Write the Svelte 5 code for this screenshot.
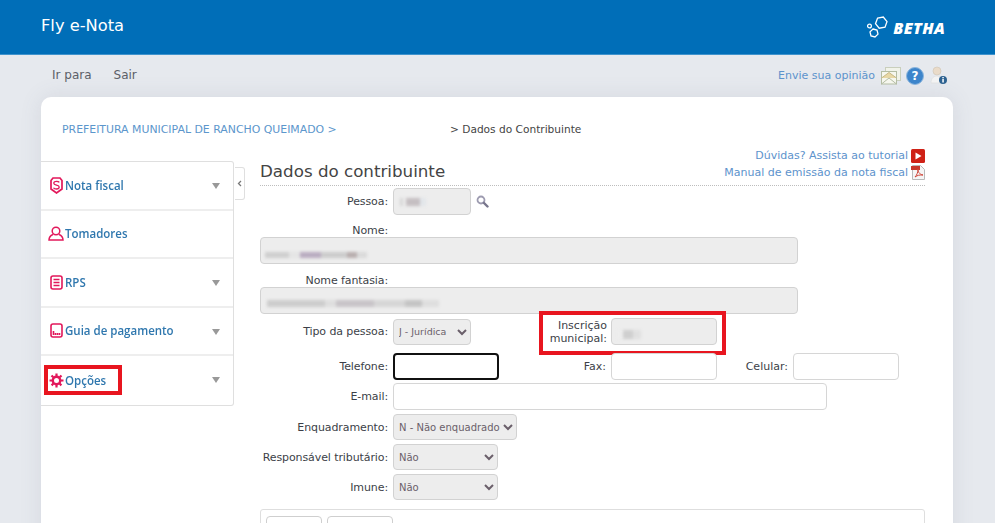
<script>
  const menu = [
    { label: 'Nota fiscal', icon: 'note', arrow: true },
    { label: 'Tomadores', icon: 'user', arrow: false },
    { label: 'RPS', icon: 'rps', arrow: true },
    { label: 'Guia de pagamento', icon: 'guide', arrow: true },
    { label: 'Opções', icon: 'gear', arrow: true, marked: true }
  ];
</script>

<div class="page">
  <header class="top">
    <span class="brand">Fly e-Nota</span>
    <span class="logo">
      <svg width="22" height="24" viewBox="0 0 22 24" fill="none" stroke="#fff" stroke-width="1.300" aria-hidden="true">
        <path d="M11.500 2.200l5.800-1.200 3.700 4.600-2 5.500-5.800 1.100-3.700-4.500z" />
        <circle cx="3.500" cy="10" r="1.900" />
        <path d="M7 13l4 1.100 1 4-3 2.900-4-1.100-1-4z" />
      </svg>
      <b>BETHA</b>
    </span>
  </header>

  <nav class="bar">
    <div class="bar-left"><span>Ir para</span><span>Sair</span></div>
    <div class="bar-right">
      <span class="opinion">Envie sua opinião</span>
      <svg width="20" height="18" viewBox="0 0 20 18" aria-hidden="true">
        <rect x="4.500" y="0.500" width="15" height="13" fill="#f1f3ea" stroke="#c9cfbc" />
        <rect x="0.500" y="4.500" width="15" height="12.500" fill="#f6f7ee" stroke="#b4bda4" />
        <path d="M0.500 11L8 5.500l7.500 5.500" fill="#e8d8a6" stroke="#c7b986" />
        <path d="M0.500 17L8 11l7.500 6" fill="none" stroke="#b4bda4" />
      </svg>
      <span class="help">?</span>
      <svg width="18" height="20" viewBox="0 0 18 20" aria-hidden="true">
        <circle cx="7" cy="5" r="4" fill="#eadbc9" stroke="#cfc4b6" stroke-width=".6" />
        <path d="M1 17c0-5 3-7 6-7s5 2 5 7z" fill="#f3f3f3" stroke="#dcdcdc" stroke-width=".6" />
        <circle cx="13" cy="14" r="4" fill="#2d6291" />
        <rect x="12.300" y="13" width="1.500" height="3.500" fill="#fff" />
        <rect x="12.300" y="11" width="1.500" height="1.300" fill="#fff" />
      </svg>
    </div>
  </nav>

  <main class="card">
    <div class="crumbs">
      <span class="crumb-link">PREFEITURA MUNICIPAL DE RANCHO QUEIMADO &gt;</span>
      <span class="crumb-here">&gt; Dados do Contribuinte</span>
    </div>

    <div class="columns">
      <aside class="side">
        <ul class="menu">
          {#each menu as item}
            <li class="item">
              <span class="ico">
                {#if item.icon === 'note'}
                  <svg width="13" height="17" viewBox="0 0 13 17" fill="none" stroke="#e2185b" stroke-width="1.700" aria-hidden="true">
                    <path d="M3 1h7l2 2.500V12l-5.500 4L1 12V3.500z" />
                    <path d="M9.300 5.300C8.800 4.500 7.700 4.300 6.500 4.300 5 4.300 3.800 5 3.800 6.300c0 2.500 5.400 1.300 5.400 3.800 0 1.200-1.200 1.900-2.700 1.900-1.300 0-2.500-.4-3-1.300" stroke-width="1.300" />
                  </svg>
                {:else if item.icon === 'user'}
                  <svg width="16" height="15" viewBox="0 0 16 15" fill="none" stroke="#e2185b" stroke-width="1.500" aria-hidden="true">
                    <circle cx="8" cy="5" r="3.800" />
                    <path d="M5 8.500C2.500 9.500 1 11 1 14h14c0-3-1.500-4.500-4-5.500" />
                  </svg>
                {:else if item.icon === 'rps'}
                  <svg width="13" height="15" viewBox="0 0 13 15" fill="none" stroke="#e2185b" stroke-width="1.600" aria-hidden="true">
                    <rect x="1" y="1" width="11" height="13" rx="2" />
                    <path d="M3.500 4.500h6M3.500 7.500h6M3.500 10.500h6" />
                  </svg>
                {:else if item.icon === 'guide'}
                  <svg width="13" height="15" viewBox="0 0 13 15" fill="none" stroke="#e2185b" stroke-width="1.600" aria-hidden="true">
                    <rect x="1" y="1" width="11" height="13" rx="2" />
                    <path d="M3.500 8v4M5.500 10v2M7.500 10v2M9.500 10v2" />
                  </svg>
                {:else}
                  <svg width="15" height="15" viewBox="0 0 15 15" aria-hidden="true">
                    <circle cx="7.500" cy="7.500" r="3.700" fill="none" stroke="#e2185b" stroke-width="2.400" />
                    <path d="M7.500 0.500v14M0.500 7.500h14M2.500 2.500l10 10M12.500 2.500l-10 10" stroke="#e2185b" stroke-width="2.200" stroke-dasharray="2.600 8.800" />
                  </svg>
                {/if}
              </span>
              <span class="item-label">{item.label}</span>
              {#if item.arrow}<span class="tri"></span>{/if}
              {#if item.marked}<span class="mark mark-options"></span>{/if}
            </li>
          {/each}
        </ul>
        <span class="toggle">
          <svg width="5" height="7" viewBox="0 0 5 7" fill="none" stroke="#777" stroke-width="1.300" aria-hidden="true"><path d="M4 1L1.500 3.500 4 6" /></svg>
        </span>
      </aside>

      <section class="content">
        <div class="title-row">
          <h1>Dados do contribuinte</h1>
          <div class="links">
            <div class="link-row">
              <span>Dúvidas? Assista ao tutorial</span>
              <svg width="14" height="14" viewBox="0 0 14 14" aria-hidden="true">
                <rect width="14" height="14" rx="1.500" fill="#cf2116" />
                <path d="M4.500 3.500v7L10.500 7z" fill="#fff" />
              </svg>
            </div>
            <div class="link-row">
              <span>Manual de emissão da nota fiscal</span>
              <svg width="14" height="15" viewBox="0 0 14 15" aria-hidden="true">
                <path d="M1.500 0.500h8l4 4v10h-12z" fill="#f5f5f5" stroke="#b9b9b9" />
                <rect x="0" y="1" width="9" height="4" fill="#c8372c" />
                <path d="M4 12c2-2 3-5 3-8 0 3 1 5 5 6-4 0-5 0-8 2z" fill="none" stroke="#d0463a" />
              </svg>
            </div>
          </div>
        </div>

        <form class="form">
          <div class="row row-pessoa">
            <label class="lab" for="f-pessoa">Pessoa:</label>
            <div class="field w78 off" id="f-pessoa"><i class="smear s-short"></i></div>
            <svg class="search" width="13" height="13" viewBox="0 0 13 13" fill="none" aria-hidden="true">
              <circle cx="5" cy="5" r="3.500" stroke="#9d9bb0" stroke-width="1.800" />
              <path d="M8 8l3.500 3.500" stroke="#77758c" stroke-width="2.400" stroke-linecap="round" />
            </svg>
          </div>

          <div class="stack stack-name">
            <div class="stack-label">Nome:</div>
            <div class="field wide off"><i class="smear s-name"></i></div>
          </div>
          <div class="stack stack-fantasy">
            <div class="stack-label">Nome fantasia:</div>
            <div class="field wide off"><i class="smear s-fantasy"></i></div>
          </div>

          <div class="row row-type">
            <label class="lab" for="f-tipo">Tipo da pessoa:</label>
            <select class="sel w78 narrow-text" id="f-tipo"><option>J - Jurídica</option></select>
            <div class="reg-wrap">
              <div class="reg-label">Inscrição municipal:</div>
              <div class="field w106 off"><i class="smear s-reg"></i></div>
              <span class="mark mark-reg"></span>
            </div>
          </div>

          <div class="row row-phone">
            <label class="lab" for="f-tel">Telefone:</label>
            <div class="field w106 focus" id="f-tel"></div>
            <span class="lab2 lab-fax">Fax:</span>
            <div class="field w106"></div>
            <span class="lab2 lab-cel">Celular:</span>
            <div class="field w106"></div>
          </div>

          <div class="row row-mail">
            <label class="lab" for="f-mail">E-mail:</label>
            <div class="field w434" id="f-mail"></div>
          </div>

          <div class="row row-enq">
            <label class="lab" for="f-enq">Enquadramento:</label>
            <select class="sel w124" id="f-enq"><option>N - Não enquadrado</option></select>
          </div>
          <div class="row row-sel">
            <label class="lab" for="f-resp">Responsável tributário:</label>
            <select class="sel w105" id="f-resp"><option>Não</option></select>
          </div>
          <div class="row row-sel">
            <label class="lab" for="f-imune">Imune:</label>
            <select class="sel w105" id="f-imune"><option>Não</option></select>
          </div>

          <div class="box">
            <span class="tab tab-a"></span>
            <span class="tab tab-b"></span>
          </div>
        </form>
      </section>
    </div>
  </main>
</div>

<style>
  :global(body) {
    margin: 0;
    background: #e6e9ee;
  }
  .page {
    width: 995px;
    height: 523px;
    overflow: hidden;
    font-family: "DejaVu Sans", Verdana, sans-serif;
    font-size: 11px;
    color: #3c3f48;
    background: #e6e9ee;
  }
  .top {
    height: 54px;
    background: #006eb8;
    border-bottom: 1px solid #3f93cd;
    display: flex;
    align-items: center;
    justify-content: space-between;
    padding: 0 50px 0 41px;
  }
  .brand {
    color: #fff;
    font-size: 16.300px;
    margin-top: -4px;
  }
  .logo {
    display: flex;
    align-items: center;
    gap: 5px;
    color: #fff;
    margin-top: 1px;
  }
  .logo b {
    font-family: "Open Sans", sans-serif;
    font-size: 16px;
    font-weight: 800;
    font-style: italic;
    letter-spacing: 0.300px;
  }
  .bar {
    height: 42px;
    display: flex;
    align-items: center;
    justify-content: space-between;
    padding: 0 47px 0 52px;
  }
  .bar-left {
    display: flex;
    gap: 22px;
    font-size: 12px;
    color: #5c6068;
    margin-top: -3px;
  }
  .bar-right {
    display: flex;
    align-items: center;
    gap: 5px;
    margin-top: -1px;
  }
  .opinion {
    color: #5d93cc;
    margin-right: 1px;
  }
  .help {
    width: 16px;
    height: 16px;
    margin-right: 1px;
    border-radius: 50%;
    background: #3d85cb;
    border: 1px solid #8cb6dd;
    color: #fff;
    font-size: 12px;
    font-weight: 700;
    display: flex;
    align-items: center;
    justify-content: center;
  }
  .card {
    margin: 0 42px 0 41px;
    height: 500px;
    background: #fff;
    border-radius: 10px 10px 0 0;
    box-shadow: 0 0 22px rgba(90, 100, 120, 0.12);
  }
  .crumbs {
    height: 64px;
    padding-left: 21px;
    display: flex;
    align-items: center;
    font-size: 10.600px;
    box-sizing: border-box;
  }
  .crumb-link {
    color: #5c96cc;
    width: 388px;
    font-size: 10.900px;
    white-space: nowrap;
  }
  .crumb-here {
    color: #444;
  }
  .columns {
    display: flex;
  }
  .side {
    width: 193px;
    flex: none;
    position: relative;
  }
  .menu {
    list-style: none;
    margin: 0;
    padding: 0;
    border: 1px solid #dfdfdf;
    border-left: 0;
    border-radius: 0 3px 3px 0;
  }
  .item {
    position: relative;
    height: 48.500px;
    display: flex;
    align-items: center;
    border-bottom: 2px solid #eeeeee;
    box-sizing: border-box;
    padding-left: 7px;
    font-family: "Open Sans", sans-serif;
    font-size: 12.500px;
    font-weight: 600;
    color: #2f77ae;
  }
  .item:last-child {
    border-bottom: 0;
  }
  .ico {
    width: 16px;
    margin-right: 1px;
    display: flex;
    justify-content: center;
    flex: none;
  }
  .item-label {
    transform: scaleX(0.92);
    transform-origin: left center;
    white-space: nowrap;
  }
  .tri {
    position: absolute;
    right: 13px;
    top: 21px;
    width: 0;
    height: 0;
    border-left: 4px solid transparent;
    border-right: 4px solid transparent;
    border-top: 6px solid #999;
  }
  .mark {
    position: absolute;
    border: 4px solid #e8151f;
    box-sizing: border-box;
    pointer-events: none;
  }
  .mark-options {
    left: 3px;
    top: 9px;
    width: 78px;
    height: 30px;
  }
  .toggle {
    position: absolute;
    left: 194px;
    top: 6px;
    width: 9px;
    height: 31px;
    border: 1px solid #dfdfdf;
    border-left: 0;
    border-radius: 0 3px 3px 0;
    display: flex;
    align-items: center;
    justify-content: center;
  }
  .content {
    margin-left: 26px;
    width: 665px;
    margin-top: -17px;
  }
  .title-row {
    height: 41px;
    display: flex;
    justify-content: space-between;
    align-items: flex-end;
    border-bottom: 1px dotted #bdbdbd;
    box-sizing: content-box;
  }
  h1 {
    margin: 0 0 4px;
    font-size: 16.700px;
    font-weight: 400;
    color: #444;
  }
  .links {
    text-align: right;
    color: #5d93cc;
    margin-bottom: 4px;
  }
  .link-row {
    height: 17px;
    display: flex;
    justify-content: flex-end;
    align-items: center;
    gap: 3px;
  }
  .form {
    display: flex;
    flex-direction: column;
    font-size: 11px;
  }
  .row {
    display: flex;
    align-items: center;
  }
  .lab {
    width: 128px;
    margin-right: 5px;
    text-align: right;
    white-space: nowrap;
    flex: none;
    letter-spacing: -0.100px;
  }
  .field {
    height: 27px;
    box-sizing: border-box;
    border: 1px solid #d6d6d6;
    border-radius: 4px;
    background: #fff;
    flex: none;
    position: relative;
    overflow: hidden;
  }
  .off {
    background: #ededed;
    border-color: #d2d2d2;
  }
  .focus {
    border: 2px solid #111;
    border-radius: 4px;
  }
  .w78 { width: 78px; }
  .w106 { width: 106px; }
  .w434 { width: 434px; }
  .w124 { width: 124px; }
  .w105 { width: 105px; }
  .wide { width: 538px; }
  .smear {
    position: absolute;
    display: block;
    filter: blur(1.500px);
  }
  .s-short {
    left: 6px;
    width: 26px;
    top: 9px;
    height: 8px;
    background: linear-gradient(90deg, #d6d6d6 0 12%, #ededed 12% 22%, #c5bfc2 22% 78%, #e2e6ea 78%);
  }
  .s-name {
    left: 4px;
    width: 102px;
    top: 14px;
    height: 6px;
    background: linear-gradient(90deg, #cfcfcf 0 24%, #e4e4e4 24% 34%, #b9acc0 34% 55%, #cccccc 55% 80%, #b8aeae 80% 90%, #dadada 90%);
  }
  .s-fantasy {
    left: 6px;
    width: 172px;
    top: 12px;
    height: 7px;
    background: linear-gradient(90deg, #cdcdcd 0 34%, #dedede 34% 40%, #c8c4c8 40% 62%, #d6d6d6 62% 80%, #c4c4c4 80% 90%, #dedede 90%);
  }
  .s-reg {
    left: 5px;
    width: 24px;
    top: 11px;
    height: 9px;
    background: linear-gradient(90deg, #ededed 0 25%, #cfcfcf 25% 65%, #e0e0e0 65%);
  }
  .search {
    margin-left: 5px;
  }
  .row-pessoa {
    margin-top: 2px;
  }
  .stack-label {
    width: 128px;
    text-align: right;
    white-space: nowrap;
    height: 13px;
    line-height: 13px;
    letter-spacing: -0.100px;
  }
  .stack-name {
    margin-top: 9px;
  }
  .stack-fantasy {
    margin-top: 10px;
  }
  .row-type {
    margin-top: 4px;
  }
  .sel {
    height: 26px;
    box-sizing: border-box;
    border: 1px solid #d2d2d2;
    border-radius: 4px;
    background-color: #ededed;
    color: #6a5f6a;
    font-family: "DejaVu Sans", Verdana, sans-serif;
    font-size: 10px;
    padding: 0 0 0 1px;
    flex: none;
  }
  .narrow-text {
    font-size: 9.500px;
  }
  .reg-wrap {
    display: flex;
    align-items: center;
    position: relative;
    margin-left: 68px;
  }
  .reg-label {
    width: 68px;
    text-align: right;
    margin-right: 4px;
    line-height: 13px;
  }
  .mark-reg {
    left: 0;
    top: -7px;
    width: 187px;
    height: 44px;
  }
  .row-phone {
    margin-top: 8px;
  }
  .lab2 {
    text-align: right;
    flex: none;
  }
  .lab-fax {
    width: 107px;
    margin-right: 5px;
  }
  .lab-cel {
    width: 71px;
    margin-right: 5px;
  }
  .row-mail {
    margin-top: 3px;
  }
  .row-enq {
    margin-top: 4px;
  }
  .row-sel {
    margin-top: 4px;
  }
  .box {
    margin-top: 9px;
    height: 40px;
    border: 1px solid #dedede;
    border-radius: 3px;
    position: relative;
  }
  .tab {
    position: absolute;
    top: 6px;
    height: 30px;
    border: 1px solid #cfcfcf;
    border-radius: 4px;
    background: #fff;
    box-sizing: border-box;
  }
  .tab-a { left: 5px; width: 56px; }
  .tab-b { left: 66px; width: 66px; }
</style>
